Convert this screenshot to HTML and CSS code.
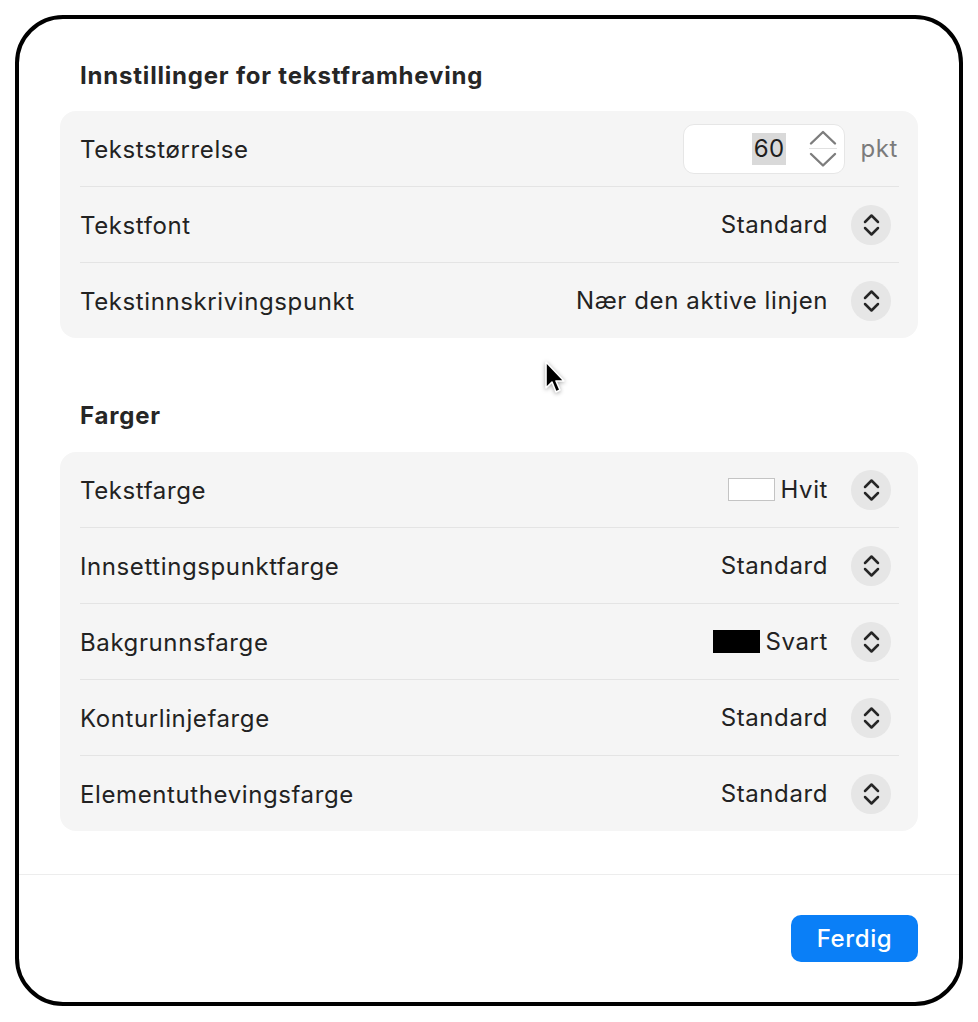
FILE: index.html
```html
<html>
<head>
    <title>Tekstframheving</title>
    <link rel="stylesheet" href="styles.css">
</head>
<body>
    <div class="sheet">
        <div class="content">
            <h2 class="groupTitle">Innstillinger for tekstframheving</h2>
            <div class="group">
                <div class="row">
                    <span class="label">Tekststørrelse</span>
                    <div class="sizeField">
                        <div class="numberBox">
                            <span class="number">60</span>
                            <span class="stepper">
                                <svg width="30" height="44" viewBox="0 0 30 44">
                                    <path d="M3 16.5 L15 5 L27 16.5" fill="none" stroke="#7d7d7d" stroke-width="2.4" stroke-linecap="round" stroke-linejoin="round"/>
                                    <line x1="1" y1="21.5" x2="29" y2="21.5" stroke="#e1e1e1" stroke-width="1"/>
                                    <path d="M3 27 L15 38.5 L27 27" fill="none" stroke="#7d7d7d" stroke-width="2.4" stroke-linecap="round" stroke-linejoin="round"/>
                                </svg>
                            </span>
                        </div>
                        <span class="unit">pkt</span>
                    </div>
                </div>
                <div class="row">
                    <span class="label">Tekstfont</span>
                    <div class="value">Standard<span class="popup"></span></div>
                </div>
                <div class="row">
                    <span class="label">Tekstinnskrivingspunkt</span>
                    <div class="value">Nær den aktive linjen<span class="popup"></span></div>
                </div>
            </div>

            <h2 class="groupTitle second">Farger</h2>
            <div class="group">
                <div class="row">
                    <span class="label">Tekstfarge</span>
                    <div class="value"><span class="swatch white"></span>Hvit<span class="popup"></span></div>
                </div>
                <div class="row">
                    <span class="label">Innsettingspunktfarge</span>
                    <div class="value">Standard<span class="popup"></span></div>
                </div>
                <div class="row">
                    <span class="label">Bakgrunnsfarge</span>
                    <div class="value"><span class="swatch black"></span>Svart<span class="popup"></span></div>
                </div>
                <div class="row">
                    <span class="label">Konturlinjefarge</span>
                    <div class="value">Standard<span class="popup"></span></div>
                </div>
                <div class="row">
                    <span class="label">Elementuthevingsfarge</span>
                    <div class="value">Standard<span class="popup"></span></div>
                </div>
            </div>
        </div>
        <div class="footer">
            <button class="done">Ferdig</button>
        </div>
    </div>

    <!-- mouse pointer -->
    <svg class="pointer" width="28" height="42" viewBox="0 0 28 42">
        <path d="M4 3 L4 29 L10 23 L14 33 L18 31 L14 22 L22 22 Z" fill="#000" stroke="#fff" stroke-width="1.6" stroke-linejoin="round"/>
    </svg>
</body>
</html>
```

FILE: styles.css
```css
body {
    margin: 0;
    padding: 15px;
    background-color: white;
    font-family: Inter, "Noto Sans", sans-serif;
    color: #222222;
}
.sheet {
    width: 940px;
    height: 983px;
    border: 4px solid black;
    border-radius: 48px;
    background-color: white;
    display: flex;
    flex-direction: column;
    overflow: hidden;
}
.content {
    padding: 43px 41px 43px 41px;
    border-bottom: 1px solid #ededed;
}
.groupTitle {
    margin: 0 0 21px 20px;
    font-size: 24px;
    line-height: 28px;
    font-weight: 700;
    letter-spacing: 0.8px;
    color: #262626;
}
.groupTitle.second {
    margin-top: 64px;
    margin-bottom: 22px;
}
.group {
    background-color: #f5f5f5;
    border-radius: 16px;
    padding: 0 19px 0 20px;
}
.row {
    height: 75px;
    display: flex;
    align-items: center;
    justify-content: space-between;
    font-size: 24px;
    letter-spacing: 0.6px;
}
.row + .row {
    border-top: 1px solid #e4e4e4;
}
.label {
    padding-top: 1px;
}
.value {
    display: flex;
    align-items: center;
}
.popup {
    width: 40px;
    height: 40px;
    border-radius: 50%;
    background-color: #e6e6e6;
    margin-left: 23px;
    margin-right: 8px;
    background-image: url("data:image/svg+xml;utf8,<svg xmlns='http://www.w3.org/2000/svg' width='40' height='40' viewBox='0 0 40 40'><path d='M14 17 L20.5 10.5 L27 17 M14 23 L20.5 29.5 L27 23' fill='none' stroke='%23262626' stroke-width='2.5' stroke-linecap='round' stroke-linejoin='round'/></svg>");
}
.swatch {
    display: inline-block;
    width: 45px;
    height: 21px;
    margin-right: 5px;
}
.swatch.white {
    background-color: white;
    border: 1px solid #c4c4c4;
}
.swatch.black {
    width: 47px;
    height: 23px;
    background-color: black;
}
.sizeField {
    display: flex;
    align-items: center;
}
.numberBox {
    width: 160px;
    height: 48px;
    border: 1px solid #e6e6e6;
    border-radius: 11px;
    background-color: white;
    display: flex;
    align-items: center;
    justify-content: flex-end;
    box-sizing: content-box;
}
.number {
    background-color: #d9d9d9;
    padding: 2px 2px;
    line-height: 28px;
    font-size: 24px;
    letter-spacing: 0.4px;
    color: #1e1e1e;
}
.stepper {
    display: flex;
    margin: 0 6px 0 22px;
}
.unit {
    color: #7b7b7b;
    font-size: 24px;
    letter-spacing: 0.6px;
    margin-left: 15px;
    margin-right: 1px;
}
.footer {
    flex: 1;
    display: flex;
    justify-content: flex-end;
    align-items: flex-start;
    padding: 40px 41px 0 0;
}
.done {
    width: 127px;
    height: 47px;
    border: none;
    border-radius: 10px;
    background-color: #0a7ff7;
    color: white;
    font-family: Inter, "Noto Sans", sans-serif;
    font-size: 24px;
    font-weight: 500;
    letter-spacing: 0.6px;
}
.pointer {
    position: absolute;
    left: 542px;
    top: 359px;
    filter: drop-shadow(0 1px 2px rgba(0, 0, 0, 0.35));
}
```
